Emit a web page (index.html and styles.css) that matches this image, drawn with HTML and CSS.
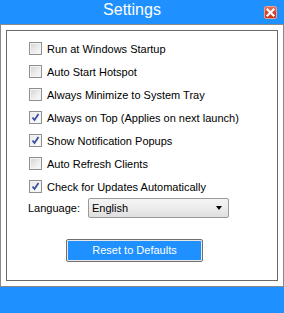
FILE: index.html
```html
<!DOCTYPE html>
<html>
<head>
<meta charset="utf-8">
<link rel="stylesheet" href="styles.css">
</head>
<body>
<div class="window">
  <div class="titlebar">
    <div class="title">Settings</div>
    <div class="close">
      <svg width="13" height="13" viewBox="0 0 13 13"><path d="M3.5 3.5 L9.5 9.5 M9.5 3.5 L3.5 9.5" stroke="#fff" stroke-width="2.2" stroke-linecap="square"/></svg>
    </div>
  </div>
  <div class="panel">
    <div class="group">
      <label class="row"><span class="cb"></span><span>Run at Windows Startup</span></label>
      <label class="row"><span class="cb"></span><span>Auto Start Hotspot</span></label>
      <label class="row"><span class="cb"></span><span>Always Minimize to System Tray</span></label>
      <label class="row"><span class="cb checked"><svg width="11" height="11" viewBox="0 0 11 11"><path d="M2.5 5.5 L4.5 8 L8.5 2" fill="none" stroke="#3a4fa0" stroke-width="1.8"/></svg></span><span>Always on Top (Applies on next launch)</span></label>
      <label class="row"><span class="cb checked"><svg width="11" height="11" viewBox="0 0 11 11"><path d="M2.5 5.5 L4.5 8 L8.5 2" fill="none" stroke="#3a4fa0" stroke-width="1.8"/></svg></span><span>Show Notification Popups</span></label>
      <label class="row"><span class="cb"></span><span>Auto Refresh Clients</span></label>
      <label class="row"><span class="cb checked"><svg width="11" height="11" viewBox="0 0 11 11"><path d="M2.5 5.5 L4.5 8 L8.5 2" fill="none" stroke="#3a4fa0" stroke-width="1.8"/></svg></span><span>Check for Updates Automatically</span></label>
      <div class="lang">
        <span class="lang-label">Language:</span>
        <div class="select"><span>English</span><span class="arrow"></span></div>
      </div>
      <div class="btn"><div class="btn-inner">Reset to Defaults</div></div>
    </div>
  </div>
</div>
</body>
</html>
```
FILE: styles.css
```css
* { box-sizing: border-box; }
html, body { margin: 0; padding: 0; }
body {
  width: 284px;
  height: 313px;
  background: #1e90ff;
  font-family: "Liberation Sans", Arial, sans-serif;
  font-size: 11px;
  color: #000;
  overflow: hidden;
}
.titlebar {
  height: 24px;
  display: flex;
  align-items: flex-start;
  background: #1e90ff;
}
.title {
  flex: 1;
  text-align: center;
  color: #fff;
  font-size: 16px;
  line-height: 20px;
}
.close {
  width: 13px;
  height: 13px;
  margin-top: 6px;
  margin-right: 7px;
  border-radius: 2px;
  border: 1px solid #e8a090;
  background: linear-gradient(180deg, #e8705a 0%, #d0402a 60%, #c23820 100%);
  display: flex;
  align-items: center;
  justify-content: center;
  overflow: hidden;
}
.close svg { display: block; flex: none; }
.panel {
  background: #fff;
  border: 1px solid #8a8a8a;
  padding: 5px;
}
.group {
  border: 1px solid #6a6a6a;
  height: 251px;
  padding: 6px 0 0 21px;
}
.row {
  display: flex;
  align-items: center;
  height: 23px;
  padding-left: 1px;
  gap: 5px;
  white-space: nowrap;
}
.cb {
  width: 13px;
  height: 13px;
  flex: none;
  border: 1px solid #8e8f8f;
  background: linear-gradient(135deg, #d2d2d2 0%, #ececec 55%, #fbfbfb 100%);
  box-shadow: inset 0 0 0 1px #f4f4f4;
  display: flex;
  align-items: center;
  justify-content: center;
}
.cb.checked {
  background: linear-gradient(135deg, #e6e6e6 0%, #f6f6f6 60%, #ffffff 100%);
}
.cb svg { display: block; }
.lang {
  display: flex;
  align-items: center;
  height: 20px;
}
.lang-label { width: 60px; flex: none; }
.select {
  width: 141px;
  height: 20px;
  border: 1px solid #9a9a9a;
  border-radius: 2px;
  background: linear-gradient(180deg, #f4f4f4 0%, #ececec 50%, #dedede 100%);
  display: flex;
  align-items: center;
  justify-content: space-between;
  padding: 0 6px 0 3px;
}
.arrow {
  width: 0;
  height: 0;
  border-left: 3.5px solid transparent;
  border-right: 3.5px solid transparent;
  border-top: 4px solid #000;
}
.btn {
  margin-top: 21px;
  margin-left: 38px;
  width: 137px;
  height: 23px;
  border: 1px solid #707070;
  border-radius: 2px;
  padding: 1px;
  background: #e8e8e8;
}
.btn-inner {
  height: 100%;
  background: #1e90ff;
  color: #fff;
  text-align: center;
  line-height: 19px;
}
```
